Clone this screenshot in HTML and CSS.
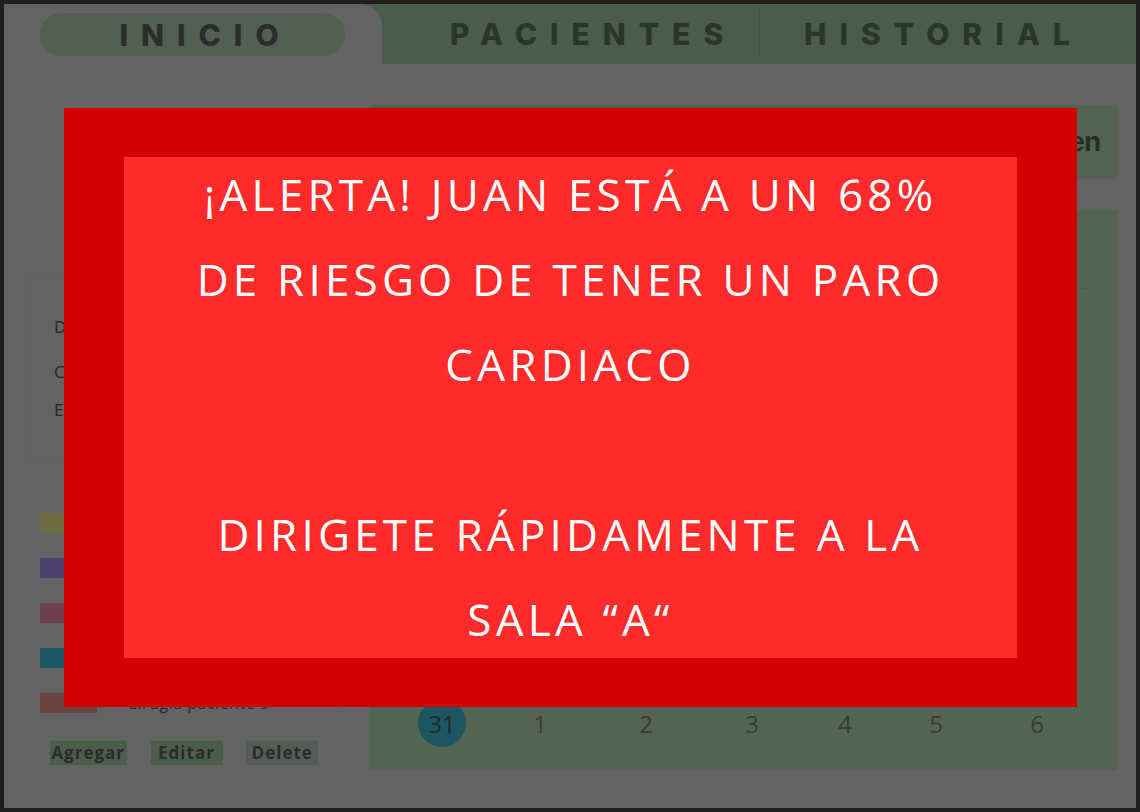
FILE: index.html
```html
<!DOCTYPE html>
<html lang="es">
<head>
<meta charset="utf-8">
<title>Inicio</title>
<link rel="stylesheet" href="styles.css">
</head>
<body>
<div class="app">
  <nav class="tabs">
    <div class="tab-active"><span class="pill">INICIO</span></div>
    <div class="tabs-rest">
      <a class="tab-link tab-pac">PACIENTES</a>
      <span class="divider"></span>
      <a class="tab-link tab-his">HISTORIAL</a>
    </div>
  </nav>
  <main class="content">
    <aside class="side">
      <section class="info">
        <p class="info-l1">Doctor: Juan Pérez</p>
        <p class="info-l2">Correo: juan.perez@hospital.mx</p>
        <p class="info-l3">Especialidad: Cardiología</p>
      </section>
      <section class="events">
        <ul class="event-list">
          <li><span class="sw sw1"></span>Cirugía paciente 1</li>
          <li><span class="sw sw2"></span>Cirugía paciente 2</li>
          <li><span class="sw sw3"></span>Cirugía paciente 3</li>
          <li><span class="sw sw4"></span>Cirugía paciente 4</li>
          <li><span class="sw sw5"></span>Cirugía paciente 5</li>
        </ul>
        <div class="actions">
          <button class="btn btn-green">Agregar</button>
          <button class="btn btn-green">Editar</button>
          <button class="btn btn-gray">Delete</button>
        </div>
      </section>
    </aside>
    <section class="main">
      <div class="welcome">Bienvenido, Dr. Carmen</div>
      <div class="calendar">
        <div class="cal-head">Julio 2023</div>
        <div class="cal-body">
          <div class="week"><span>26</span><span>27</span><span>28</span><span>29</span><span>30</span><span>1</span><span>2</span></div>
          <div class="week"><span>3</span><span>4</span><span>5</span><span>6</span><span>7</span><span>8</span><span>9</span></div>
          <div class="week"><span>10</span><span>11</span><span>12</span><span>13</span><span>14</span><span>15</span><span>16</span></div>
          <div class="week"><span>17</span><span>18</span><span>19</span><span>20</span><span>21</span><span>22</span><span>23</span></div>
          <div class="week"><span>24</span><span>25</span><span>26</span><span>27</span><span>28</span><span>29</span><span>30</span></div>
          <div class="week"><span class="today">31</span><span>1</span><span>2</span><span>3</span><span>4</span><span>5</span><span>6</span></div>
        </div>
      </div>
    </section>
  </main>
</div>

<div class="alert">
  <div class="alert-inner">
    <p class="alert-text">¡ALERTA! JUAN ESTÁ A UN 68%<br>DE RIESGO DE TENER UN PARO<br>CARDIACO<br><br>DIRIGETE RÁPIDAMENTE A LA<br>SALA “A“</p>
  </div>
</div>
</body>
</html>
```

FILE: styles.css
```css
* { box-sizing: border-box; }
html, body { margin: 0; padding: 0; }
body {
  background: #1f1f1f;
  width: 1140px;
  height: 812px;
  overflow: hidden;
  font-family: "Open Sans", "Noto Sans", sans-serif;
  color: #262626;
}
.app {
  margin: 4px;
  width: 1132px;
  height: 804px;
  background: #636363;
}

/* nav */
.tabs {
  display: flex;
  height: 60px;
  background: #4a5c4a;
}
.tab-active {
  width: 378px;
  background: #636363;
  border-top-right-radius: 22px;
  padding: 9px 0 0 36px;
}
.pill {
  display: flex;
  align-items: center;
  justify-content: center;
  width: 305px;
  height: 43px;
  border-radius: 22px;
  background: #535f53;
  font-family: "Inter", "Liberation Sans", sans-serif;
  font-weight: 800;
  font-size: 30px;
  letter-spacing: 13px;
  padding-left: 26px;
  color: #2b2c2b;
}
.tabs-rest {
  flex: 1;
  display: flex;
  align-items: center;
}
.tab-link {
  font-family: "Inter", "Liberation Sans", sans-serif;
  font-weight: 800;
  font-size: 30px;
  letter-spacing: 13px;
  color: #2b352c;
  text-decoration: none;
}
.tab-pac {
  width: 377px;
  padding-left: 68px;
}
.tab-his {
  padding-left: 44px;
}
.divider {
  width: 1px;
  height: 48px;
  background: #3f5050;
}

/* content */
.content {
  display: grid;
  grid-template-columns: 318px 747px;
  column-gap: 27px;
  padding-left: 21px;
}
.side {
  display: flex;
  flex-direction: column;
  padding-top: 213px;
}
.info {
  height: 184px;
  border: 1px solid #586658;
  padding: 39px 0 0 28px;
  font-size: 17px;
  overflow: hidden;
}
.info p { margin: 0; line-height: 20px; white-space: nowrap; }
.info .info-l2 { margin-top: 25px; }
.info .info-l3 { margin-top: 18px; }

.events {
  margin-top: 38px;
  height: 271px;
  border: 1px solid #5c6d5c;
  display: flex;
  flex-direction: column;
}
.event-list {
  list-style: none;
  margin: 0;
  padding: 13px 0 0 14px;
  flex: 1;
  border-bottom: 1px solid #5c6d5c;
}
.event-list li {
  display: flex;
  align-items: center;
  height: 20px;
  margin-bottom: 25px;
  font-size: 16px;
  letter-spacing: 0.5px;
  color: #2a2a2a;
}
.sw {
  width: 57px;
  height: 20px;
  margin-right: 30px;
  flex: none;
}
.sw1 { background: #6b6a40; }
.sw2 { background: #4c4270; }
.sw3 { background: #6b3f4b; }
.sw4 { background: #1c5662; }
.sw5 { background: #6b4242; }
.actions {
  height: 40px;
  display: flex;
  justify-content: space-evenly;
  align-items: center;
  padding-bottom: 2px;
}
.btn {
  height: 24px;
  border: 0;
  padding: 0;
  font-family: "Open Sans", sans-serif;
  font-weight: 700;
  font-size: 17px;
  line-height: 24px;
  letter-spacing: 1px;
  color: #2b2b2b;
}
.btn-green { background: #4b5e4b; }
.btn:nth-child(1) { width: 77px; }
.btn:nth-child(2) { width: 72px; }
.btn-gray { background: #575b57; width: 72px; }

.main {
  display: flex;
  flex-direction: column;
  padding-top: 41px;
}
.welcome {
  height: 74px;
  background: #526352;
  border-radius: 3px;
  display: flex;
  align-items: center;
  justify-content: flex-end;
  padding-right: 17px;
  font-family: "Liberation Sans", sans-serif;
  font-weight: 700;
  font-size: 28px;
  letter-spacing: -1px;
  color: #2a2c2a;
}
.calendar {
  margin-top: 31px;
  height: 560px;
  background: #536452;
  display: flex;
  flex-direction: column;
}
.cal-head {
  height: 79px;
  margin: 0 30px 0 22px;
  border-bottom: 1px solid #4c5d4c;
  display: flex;
  align-items: center;
  font-size: 22px;
  color: #2c342c;
}
.cal-body {
  flex: 1;
  display: flex;
  flex-direction: column;
  justify-content: flex-end;
  padding-bottom: 23px;
}
.week {
  display: grid;
  grid-template-columns: 100px 96px 116px 96px 90px 92px 110px;
  padding-left: 22px;
  height: 48px;
  margin-top: 22px;
}
.week span {
  display: flex;
  align-items: center;
  justify-content: center;
  font-size: 24px;
  color: #353d35;
}
.week .today {
  width: 48px;
  height: 48px;
  border-radius: 50%;
  background: #1c5662;
  justify-self: center;
  color: #1f2a2c;
}

/* alert */
.alert {
  position: absolute;
  left: 64px;
  top: 108px;
  width: 1013px;
  height: 599px;
  background: #d20000;
  padding: 49px 60px;
}
.alert-inner {
  height: 100%;
  background: #ff2b2b;
  overflow: hidden;
}
.alert-text {
  margin: -5px 0 0;
  text-align: center;
  color: #ffffff;
  font-family: "Open Sans", sans-serif;
  font-weight: 500;
  font-size: 44px;
  line-height: 85px;
  letter-spacing: 4.2px;
}
```
